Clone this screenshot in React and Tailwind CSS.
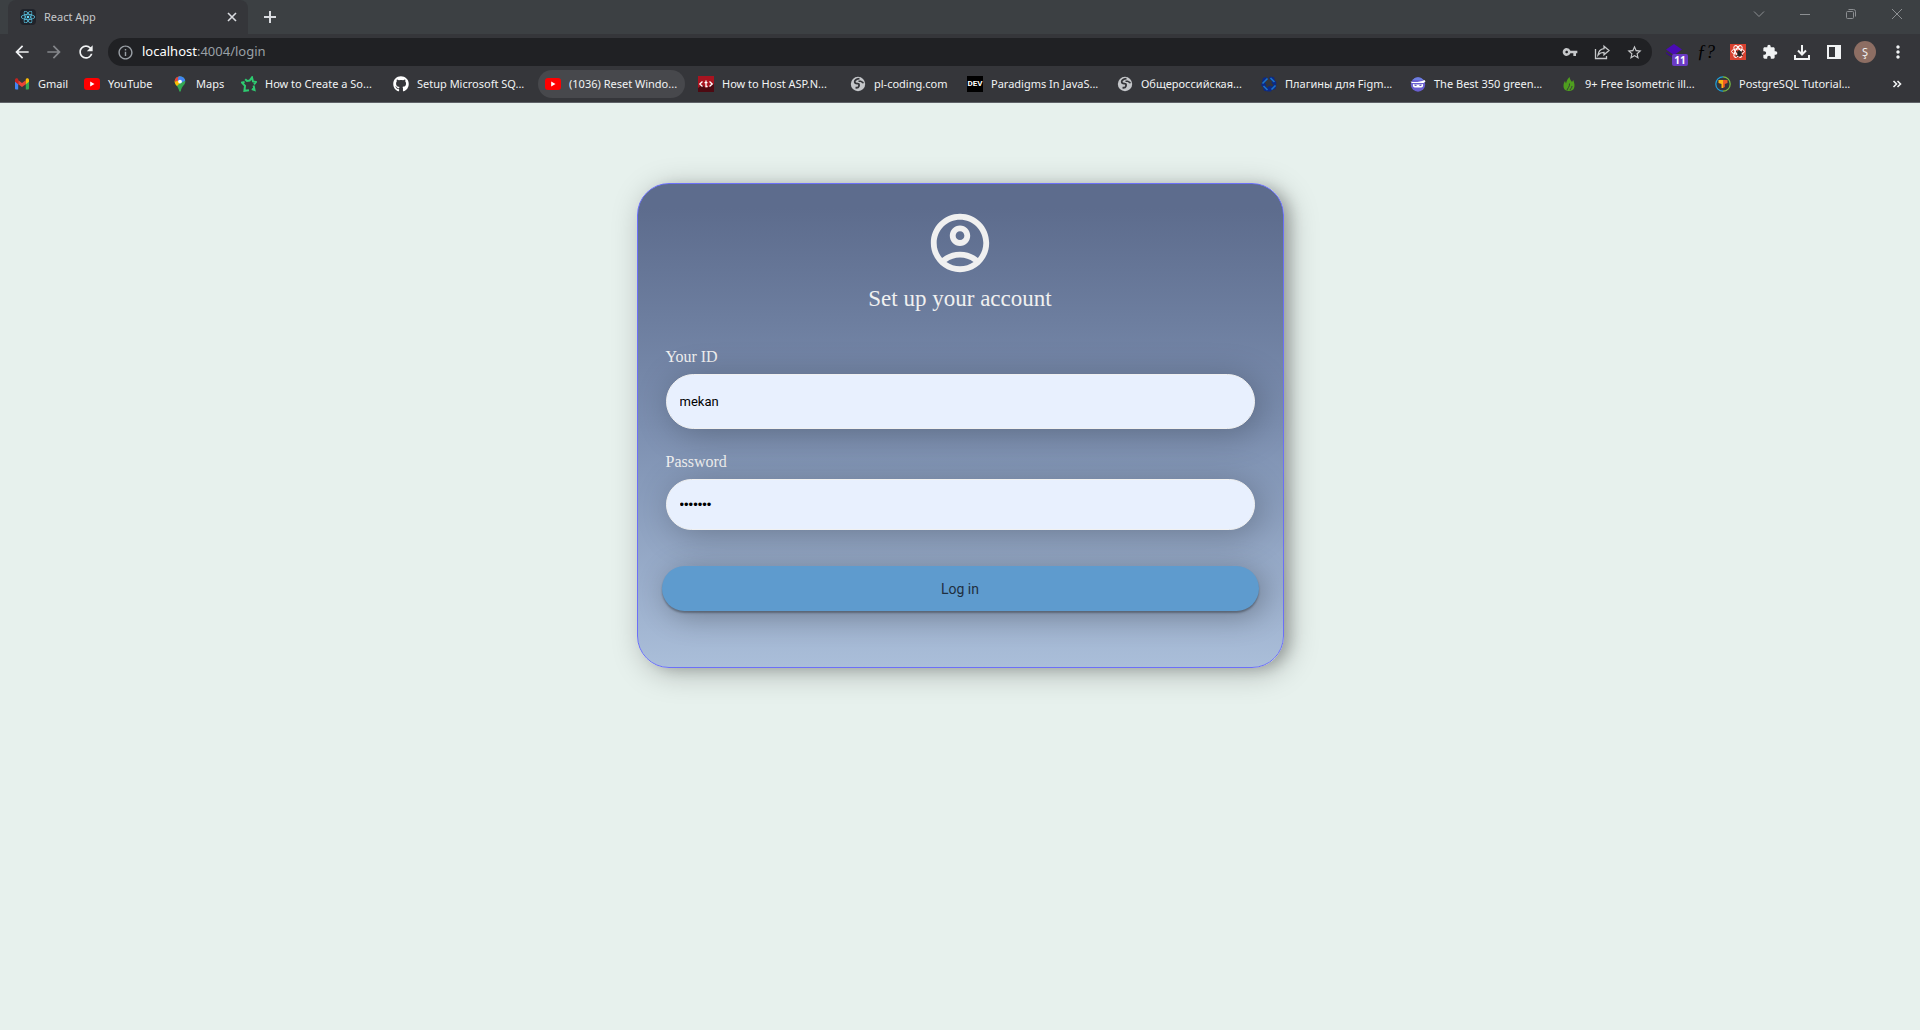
import React from 'react';
import {
    MdArrowBack,
    MdArrowForward,
    MdRefresh,
    MdInfoOutline,
    MdVpnKey,
    MdStarBorder,
    MdExtension,
    MdMoreVert,
    MdOutlineAccountCircle,
} from 'react-icons/md';
import { FaGithub, FaReact } from 'react-icons/fa';

const GmailIcon = () => (
    <svg viewBox="0 0 16 16" className="w-4 h-4 shrink-0">
        <path d="M1 4v8.5a1 1 0 0 0 1 1h2.2V7z" fill="#4285f4" />
        <path d="M15 4v8.5a1 1 0 0 1-1 1h-2.2V7z" fill="#34a853" />
        <path d="M4.2 4.2 8 7.1l3.8-2.9v4L8 11 4.2 8.2z" fill="#ea4335" />
        <path d="M1 4c0-1.6 1.7-2.2 2.8-1.3l.4.3v5.2L1 5.8z" fill="#c5221f" />
        <path d="M15 4c0-1.6-1.7-2.2-2.8-1.3l-.4.3v5.2L15 5.8z" fill="#fbbc04" />
    </svg>
);

const YoutubeIcon = () => (
    <svg viewBox="0 0 16 16" className="w-4 h-4 shrink-0">
        <rect y="2" width="16" height="12" rx="3" fill="#f00" />
        <path d="M6.2 5.5v5L10.5 8z" fill="#fff" />
    </svg>
);

const MapsIcon = () => (
    <svg viewBox="0 0 16 16" className="w-4 h-4 shrink-0">
        <clipPath id="maps-pin">
            <path d="M8 .3a5.3 5.3 0 0 0-5.3 5.3c0 3.4 3.4 4.4 4.5 9.3.2 1 1.4 1 1.6 0 1.1-4.9 4.5-5.9 4.5-9.3A5.3 5.3 0 0 0 8 .3z" />
        </clipPath>
        <g clipPath="url(#maps-pin)">
            <rect width="16" height="16" fill="#34a853" />
            <path d="M0 0h8.5L4 5.5 0 5z" fill="#ea4335" />
            <path d="M7 0h9v3L8 7.5 5 4z" fill="#4285f4" />
            <path d="M0 6 4 3.5 8 7l-5 5z" fill="#fbbc04" />
            <path d="M1 2 4 .2 6.5 4 3 6z" fill="#ea4335" />
        </g>
        <circle cx="8" cy="5.6" r="1.9" fill="#fff" />
    </svg>
);

const StarOutlineIcon = () => (
    <svg viewBox="0 0 16 16" className="w-4 h-4 shrink-0" fill="none" stroke="#2ecc71" strokeWidth="2">
        <path d="M4.2 3.2 6 5l2.6-.4L11 1.4l1 4 3 .6-2 2.4M12.6 9.5l.9 4.5-2.7-1M8 14.200l-4.600.6.6-5L1 6.600l2.600-.6" />
    </svg>
);

const TagIcon = () => (
    <svg viewBox="0 0 16 16" className="w-4 h-4 shrink-0">
        <rect width="16" height="16" fill="#a81420" />
        <path d="M0 12 4 9l4 3 8-4v8H0z" fill="#4d0a12" />
        <path d="M4.5 5.5 1.8 8l2.7 2.5M11.5 5.5 14.2 8l-2.7 2.5M8 4.5v6h1.6M6.5 6.7h3" fill="none" stroke="#fff" strokeWidth="1.3" />
    </svg>
);

const GlobeIcon = () => (
    <svg viewBox="0 0 16 16" className="w-4 h-4 shrink-0">
        <circle cx="8" cy="8" r="7.2" fill="#c4c6c9" />
        <path d="M9.5 2.6C6.5 3 4.6 4.3 4.7 6c.1 1.7 1.8 1.5 3.2 1.7 1.7.2 1.2 1.8.9 2.7-.4 1.3-1.6 1.500-3.300 1.300" fill="none" stroke="#35363a" strokeWidth="1.8" />
        <path d="M8.5 5.2h2.2l2.8 1.8" fill="none" stroke="#35363a" strokeWidth="1.5" />
    </svg>
);

const DevIcon = () => (
    <span className="flex w-4 h-4 shrink-0 items-center justify-center bg-black font-['Roboto',sans-serif] text-[8px] font-bold text-white">
        DEV
    </span>
);

const ShutterIcon = () => (
    <svg viewBox="0 0 16 16" className="w-4 h-4 shrink-0">
        <path d="M2 2l3-1 2 2-4 4-2-1zM9 .5l4 .8 1 3-2 2-4-4zM15.500 9l-1 4-3 1-2-2 4-4zM7 15.500l-4-.8-1-3 2-2 4 4zM9 9l3 3-2 3.500H7L5 13zM11 4l4 1 .5 3-2 2-3-3zM.5 7l3-1 2 3-2 3-3-2z" fill="#0c2a85" />
        <path d="m1.500 7.500 5-5M9.500 2l4 4M14.500 9.500l-4 4M6.500 14l-4-4" stroke="#1b74c9" strokeWidth="1.6" />
        <circle cx="8" cy="8" r="2.2" fill="#35363a" />
    </svg>
);

const NinjaIcon = () => (
    <svg viewBox="0 0 16 16" className="w-4 h-4 shrink-0">
        <circle cx="8" cy="8.5" r="7.2" fill="#6a5fd0" />
        <path d="M2.500 4a7 7 0 0 1 11 0z" fill="#6c7fe0" />
        <path d="M.5 5.500c4 1 9 .8 14-1.500l1 1.500-2 1.500H2z" fill="#fff" />
        <path d="M3 8c3 .8 7 .8 10 0 .5 2.500-.5 3.500-2 3.500H5C3.500 11.500 2.500 10.500 3 8z" fill="#fff" />
        <path d="m4.500 9.200 2 .3M11.500 9.200l-2 .3" stroke="#4b3fb0" />
    </svg>
);

const LeafIcon = () => (
    <svg viewBox="0 0 16 16" className="w-4 h-4 shrink-0">
        <path d="M8.5 1c.5 2.5 1.5 3.5 2.5 5l1.3-2c1.2 3.5 1.7 6 .7 8.3-.7 1.7-2.5 2.700-5 2.700-3.500 0-5.500-2-5.500-5 0-2 .6-3.600 1.500-5l1 2.500C5.500 5 6.500 3 8.500 1z" fill="#4f9e1f" />
        <path d="M6 14.5c0-2 3-3.5 2.5-7M9 14c.5-1.5 2-2 2-4" stroke="#35363a" strokeWidth=".9" fill="none" />
    </svg>
);

const TutorialIcon = () => (
    <svg viewBox="0 0 16 16" className="w-4 h-4 shrink-0">
        <path d="M8 .8a7.2 7.2 0 0 0 0 14.4" fill="none" stroke="#1da1dc" strokeWidth="1.2" />
        <path d="M8 .8a7.2 7.2 0 0 1 0 14.4" fill="none" stroke="#7ac143" strokeWidth="1.2" />
        <path d="M3.5 4H8v8H6.500V8l-3-1z" fill="#fbb614" />
        <path d="M8 4h4.500v3L9.800 8v3L8 12z" fill="#ef5a24" />
    </svg>
);

const bookmarks = [
    { label: 'Gmail', icon: GmailIcon, width: 'w-[70px]' },
    { label: 'YouTube', icon: YoutubeIcon, width: 'w-[88px]' },
    { label: 'Maps', icon: MapsIcon, width: 'w-[69px]' },
    { label: 'How to Create a So...', icon: StarOutlineIcon, width: 'w-[152px]' },
    { label: 'Setup Microsoft SQ...', icon: FaGithub, width: 'w-[152px]' },
    { label: '(1036) Reset Windo...', icon: YoutubeIcon, width: 'w-[153px]', active: true },
    { label: 'How to Host ASP.N...', icon: TagIcon, width: 'w-[152px]' },
    { label: 'pl-coding.com', icon: GlobeIcon, width: 'w-[117px]' },
    { label: 'Paradigms In JavaS...', icon: DevIcon, width: 'w-[150px]' },
    { label: 'Общероссийская...', icon: GlobeIcon, width: 'w-[144px]' },
    { label: 'Плагины для Figm...', icon: ShutterIcon, width: 'w-[149px]' },
    { label: 'The Best 350 green...', icon: NinjaIcon, width: 'w-[151px]' },
    { label: '9+ Free Isometric ill...', icon: LeafIcon, width: 'w-[154px]' },
    { label: 'PostgreSQL Tutorial...', icon: TutorialIcon, width: 'w-[152px]' },
];

const TabStrip = () => (
    <div className="flex h-[34px] bg-[#3c4043] pl-2">
        <div className="flex w-60 items-center rounded-t-lg bg-[#35363a] pl-3 pr-2">
            <span className="flex w-4 h-4 items-center justify-center rounded-sm bg-[#20232a]">
                <FaReact className="w-[14px] h-[14px] text-[#61dafb]" />
            </span>
            <span className="ml-2 grow text-[#c6c8ca]">React App</span>
            <button aria-label="Close tab" className="flex w-4 h-4 items-center justify-center">
                <svg viewBox="0 0 16 16" className="w-4 h-4" stroke="#dadce0" strokeWidth="1.6">
                    <path d="m4 4 8 8M12 4l-8 8" />
                </svg>
            </button>
        </div>
        <button aria-label="New tab" className="ml-[14px] flex items-center">
            <svg viewBox="0 0 16 16" className="w-4 h-4" stroke="#dadce0" strokeWidth="2">
                <path d="M8 2v12M2 8h12" />
            </svg>
        </button>
        <div className="ml-auto flex h-7 items-center gap-[30px] pr-[15px]">
            <button aria-label="Search tabs">
                <svg viewBox="0 0 16 16" className="w-4 h-4" fill="none" stroke="#8c8f92">
                    <path d="m3 5.5 5 5 5-5" />
                </svg>
            </button>
            <button aria-label="Minimize">
                <svg viewBox="0 0 16 16" className="w-4 h-4" fill="none" stroke="#8c8f92">
                    <path d="M3 8.5h10" />
                </svg>
            </button>
            <button aria-label="Restore">
                <svg viewBox="0 0 16 16" className="w-4 h-4" fill="none" stroke="#8c8f92">
                    <rect x="3.5" y="5.5" width="7" height="7" rx="1" />
                    <path d="M5.5 3.5h5a2 2 0 0 1 2 2v5" />
                </svg>
            </button>
            <button aria-label="Close">
                <svg viewBox="0 0 16 16" className="w-4 h-4" fill="none" stroke="#8c8f92">
                    <path d="m3 3 10 10M13 3 3 13" />
                </svg>
            </button>
        </div>
    </div>
);

const Toolbar = () => (
    <div className="flex h-9 items-center px-3">
        <button aria-label="Back" className="text-[#f1f3f4]">
            <MdArrowBack className="w-5 h-5" />
        </button>
        <button aria-label="Forward" className="ml-3 text-[#84868a]">
            <MdArrowForward className="w-5 h-5" />
        </button>
        <button aria-label="Reload" className="ml-3 text-[#f1f3f4]">
            <MdRefresh className="w-5 h-5" />
        </button>
        <div className="ml-3 flex h-7 grow items-center rounded-full bg-[#202124] px-[9px]">
            <MdInfoOutline className="w-[17px] h-[17px] text-[#9aa0a6]" />
            <span className="ml-2 grow text-[13px] text-white">
                localhost<span className="text-[#9aa0a6]">:4004/login</span>
            </span>
            <div className="flex items-center gap-4 text-[#c6c8ca]">
                <button aria-label="Passwords">
                    <MdVpnKey className="w-4 h-4" />
                </button>
                <button aria-label="Share">
                    <svg viewBox="0 0 16 16" className="w-4 h-4" fill="none" stroke="currentColor" strokeWidth="1.3">
                        <path d="M1.5 5v9.5h11V12" />
                        <path d="M10 2.2 15 6.5l-5 4.3V8.3c-3 0-4.5.9-6 2.7.5-3.3 2.5-5.8 6-6.3z" />
                    </svg>
                </button>
                <button aria-label="Bookmark this page">
                    <MdStarBorder className="w-[17px] h-[17px]" />
                </button>
            </div>
        </div>
        <div className="ml-[14px] flex items-center gap-4 text-[#f1f3f4]">
            <button aria-label="Layers" className="relative">
                <svg viewBox="0 0 16 16" className="w-4 h-4">
                    <path d="M8 0 16 5.5 8 11 0 5.5z" fill="#4a0bb5" />
                    <path d="M0 8v1.5l6 4V12z" fill="#3a0a8a" />
                </svg>
                <span className="absolute left-[6px] top-[10px] flex h-3 w-4 items-center justify-center rounded-xs bg-[#6a3bc4] text-[10px] font-bold text-white">
                    11
                </span>
            </button>
            <button aria-label="Font finder" className="flex h-4 w-4 items-center justify-center font-['Liberation_Serif',serif] text-[18px] italic text-black">
                ƒ?
            </button>
            <button aria-label="React developer tools" className="flex w-4 h-4 items-center justify-center bg-[#d9412f]">
                <svg viewBox="0 0 16 16" className="w-4 h-4" fill="none" stroke="#fff">
                    <ellipse cx="8" cy="7.5" rx="6.5" ry="2.6" />
                    <ellipse cx="8" cy="7.5" rx="6.5" ry="2.6" transform="rotate(60 8 7.5)" />
                    <ellipse cx="8" cy="7.5" rx="6.5" ry="2.6" transform="rotate(120 8 7.5)" />
                    <ellipse cx="9.5" cy="9.5" rx="2.2" ry="2.8" fill="#222" stroke="none" />
                    <path d="m6 7 7 5M13 7l-7 5.5M9 6v7" stroke="#222" />
                </svg>
            </button>
            <button aria-label="Extensions">
                <MdExtension className="w-4 h-4" />
            </button>
            <button aria-label="Downloads">
                <svg viewBox="0 0 16 16" className="w-4 h-4" fill="none" stroke="currentColor" strokeWidth="2">
                    <path d="M8 1v9M4 6.5 8 10.5l4-4M1 11v4h14v-4" />
                </svg>
            </button>
            <button aria-label="Side panel">
                <svg viewBox="0 0 16 16" className="w-4 h-4" fill="none" stroke="currentColor" strokeWidth="2">
                    <path d="M2 2h12v12H2z" />
                    <path d="M9 2h5v12H9z" fill="currentColor" stroke="none" />
                </svg>
            </button>
            <button aria-label="Profile" className="-mx-1 flex h-[22px] w-[22px] items-center justify-center rounded-full bg-[#8d6e63] text-[11px]">
                Ş
            </button>
            <button aria-label="Menu">
                <MdMoreVert className="w-5 h-5" />
            </button>
        </div>
    </div>
);

const BookmarksBar = () => (
    <nav className="flex h-[33px] items-center border-b border-[#5f6368] pb-1 pl-[7px] pr-[15px]">
        {bookmarks.map(({ label, icon: Icon, width, active }) => (
            <div key={label} className={width}>
                <a
                    href="#"
                    className={`flex h-7 w-fit items-center gap-2 whitespace-nowrap rounded-full pl-[7px] pr-2 ${active ? 'bg-[#47484c]' : ''}`}
                >
                    <Icon className="w-4 h-4 shrink-0 text-white" />
                    {label}
                </a>
            </div>
        ))}
        <button aria-label="More bookmarks" className="ml-auto">
            <svg viewBox="0 0 16 16" className="w-4 h-4" fill="none" stroke="#f1f3f4" strokeWidth="1.6">
                <path d="m4.5 5 3 3-3 3M8.5 5l3 3-3 3" />
            </svg>
        </button>
    </nav>
);

const LoginCard = () => (
    <form
        onSubmit={(e) => e.preventDefault()}
        className="flex w-full max-w-[647px] flex-col rounded-4xl border border-[#6c70f8] bg-linear-to-b from-[#5d6c8d] from-5% via-[#7c8fb0] to-[#aabed9] px-6 pb-14 pt-6 text-[#f0f0f0] shadow-[5px_5px_30px_rgba(0,0,0,0.25),8px_2px_14px_-2px_rgba(0,0,0,0.2)]"
    >
        <MdOutlineAccountCircle className="w-[70px] h-[70px] self-center" />
        <h1 className="mt-[5px] text-center text-[23px] leading-8">Set up your account</h1>

        <label htmlFor="user-id" className="mx-1 mt-8 text-base leading-5">
            Your ID
        </label>
        <input
            id="user-id"
            type="text"
            defaultValue="mekan"
            className="mx-1 mt-[7px] h-[55px] rounded-[28px] border border-[#f0f0f0] bg-[#e8f0fe] px-[13px] font-['Roboto',sans-serif] text-[13px] text-black shadow-[5px_5px_35px_rgba(0,0,0,0.25)]"
        />

        <label htmlFor="password" className="mx-1 mt-[23px] text-base leading-5">
            Password
        </label>
        <input
            id="password"
            type="password"
            defaultValue="1234567"
            className="mx-1 mt-[7px] h-[51px] rounded-[28px] border border-[#f0f0f0] bg-[#e8f0fe] px-[13px] font-['Liberation_Sans',sans-serif] text-[13px] text-black shadow-[5px_5px_35px_rgba(0,0,0,0.25)]"
        />

        <button
            type="submit"
            className="mt-9 h-[45px] rounded-3xl bg-[#5e9bce] font-['Roboto',sans-serif] text-sm text-[#1f2f40] shadow-[0_2px_2px_rgba(0,0,0,0.3),5px_5px_30px_rgba(0,0,0,0.3)]"
        >
            Log in
        </button>
    </form>
);

const App = () => {
    return (
        <div className="flex min-h-screen flex-col bg-[#e7f1ed]">
            <header className="bg-[#35363a] font-['Noto_Sans',sans-serif] text-[11px] text-[#f1f3f4]">
                <TabStrip />
                <Toolbar />
                <BookmarksBar />
            </header>
            <main className="flex justify-center px-4 py-20 font-['Liberation_Serif',serif]">
                <LoginCard />
            </main>
        </div>
    );
};

export default App;
